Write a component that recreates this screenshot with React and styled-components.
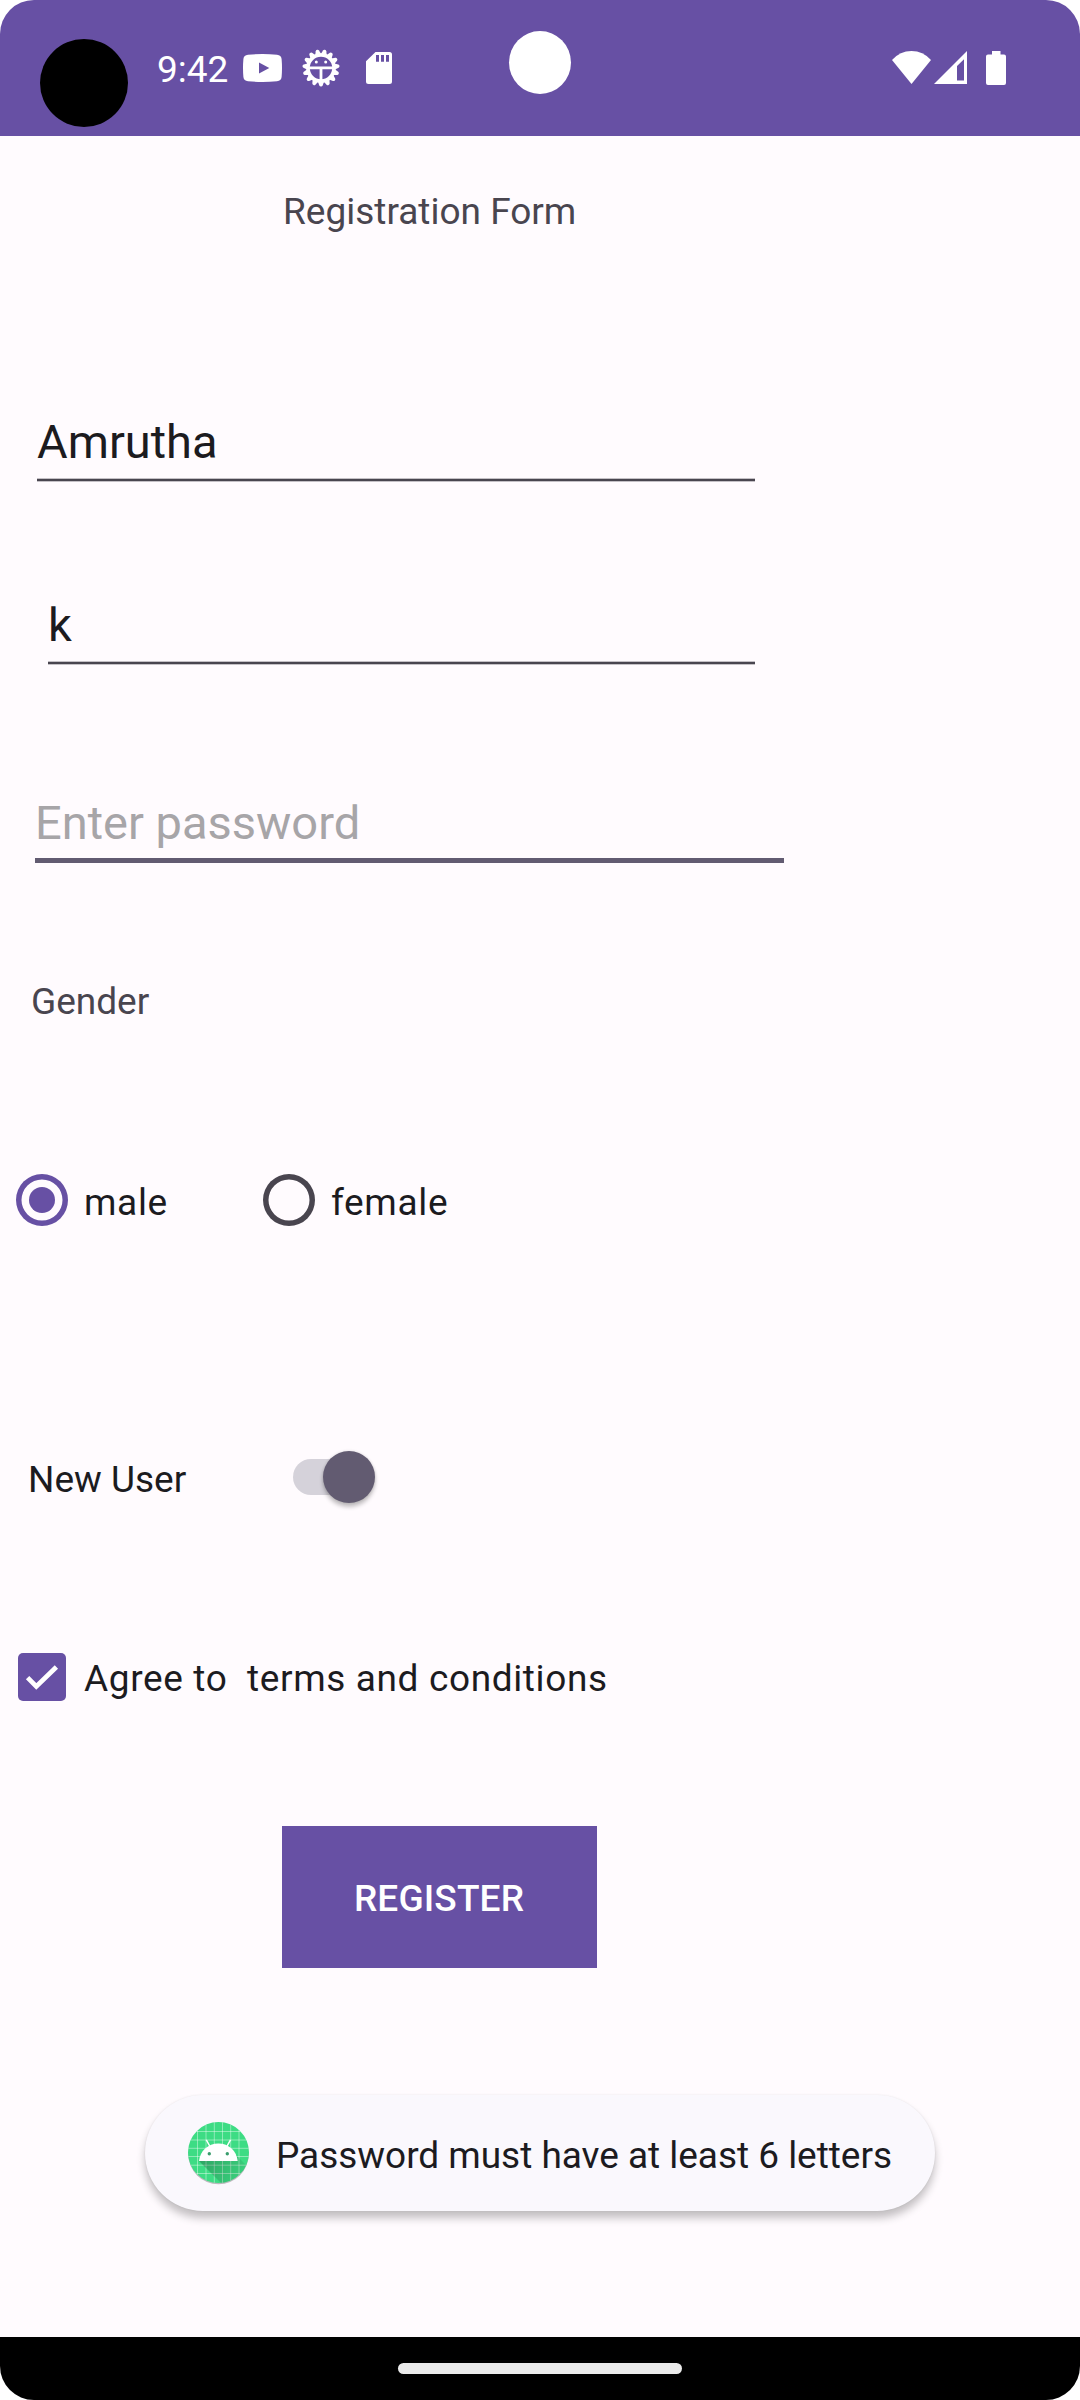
import React from "react";
import styled, { createGlobalStyle } from "styled-components";

const purple = "#6750A4";
const slate = "#625B71";
const ink = "#1C1B1F";
const muted = "#49454F";
const surface = "#FFFBFE";

const GlobalStyle = createGlobalStyle`
  *, *::before, *::after { box-sizing: border-box; }
  body {
    margin: 0;
    background: #fff;
    font-family: Roboto, "Liberation Sans", sans-serif;
  }
`;

const Phone = styled.div`
  position: relative;
  display: flex;
  flex-direction: column;
  width: 1080px;
  height: 2400px;
  overflow: hidden;
  border-radius: 34px;
  background: ${surface};
  color: ${ink};
  font-size: 37px;
  line-height: 43px;
`;

const StatusBar = styled.header`
  display: flex;
  align-items: flex-start;
  flex: none;
  height: 136px;
  padding: 0 74px 0 40px;
  background: ${purple};
  color: #fff;
`;

const Blob = styled.span`
  width: 88px;
  height: 88px;
  margin-top: 39px;
  border-radius: 50%;
  background: #000;
`;

const Clock = styled.time`
  width: 71px;
  margin: 48px 0 0 29px;
  white-space: nowrap;
`;

const StatusIcon = styled.svg`
  display: block;
  flex: none;
  width: ${(p) => p.$w}px;
  height: ${(p) => p.$h}px;
  margin: ${(p) => p.$top}px 0 0 ${(p) => p.$gap}px;
  fill: currentColor;
`;

const Signals = styled.div`
  display: flex;
  margin-left: auto;
`;

const Camera = styled.span`
  position: absolute;
  top: 31px;
  left: 509px;
  width: 62px;
  height: 63px;
  border-radius: 50%;
  background: #fff;
`;

const Form = styled.form`
  display: flex;
  flex-direction: column;
  align-items: flex-start;
  flex: 1;
`;

const Title = styled.h1`
  margin: 54px 0 0 283px;
  font: inherit;
  color: ${muted};
`;

const Field = styled.input`
  display: block;
  width: ${(p) => p.$width}px;
  height: 68px;
  margin: ${(p) => p.$top}px 0 0 ${(p) => p.$left}px;
  padding: 0 0 13px;
  border: 0;
  border-radius: 0;
  outline: 0;
  background: ${(p) =>
    p.$active
      ? `linear-gradient(${slate}, ${slate}) bottom / 100% 5px no-repeat`
      : `linear-gradient(${muted}, ${muted}) 0 calc(100% - 1px) / 100% 2px no-repeat,
         linear-gradient(rgba(73, 69, 79, 0.32), rgba(73, 69, 79, 0.32)) bottom / 100% 4px no-repeat`};
  color: ${ink};
  font: 47px/55px Roboto, "Liberation Sans", sans-serif;

  &::placeholder {
    color: #a7a5a8;
    opacity: 1;
  }
`;

const GroupLabel = styled.div`
  margin: 117px 0 0 31px;
  color: ${muted};
`;

const RadioRow = styled.div`
  display: flex;
  height: 53px;
  margin: 150px 0 0 16px;
`;

const RadioOption = styled.label`
  display: flex;
  width: 247px;
  letter-spacing: 0.656px;
`;

const RadioMark = styled.span`
  display: flex;
  align-items: center;
  justify-content: center;
  flex: none;
  width: 52px;
  height: 52px;
  margin-top: 1px;
  border-radius: 50%;
  box-shadow: inset 0 0 0 5.5px ${(p) => (p.$on ? purple : muted)};

  &::after {
    content: "";
    width: 26px;
    height: 26px;
    border-radius: 50%;
    background: ${(p) => (p.$on ? purple : "transparent")};
  }
`;

const OptionText = styled.span`
  margin: ${(p) => p.$top}px 0 0 ${(p) => p.$gap}px;
  white-space: pre;
`;

const SwitchRow = styled.label`
  display: flex;
  height: 53px;
  margin: 225px 0 0 28px;
`;

const SwitchText = styled.span`
  width: 265px;
  margin-top: 7px;
`;

const Track = styled.span`
  display: flex;
  align-items: center;
  justify-content: flex-end;
  width: 82px;
  height: 36px;
  margin-top: 8px;
  border-radius: 18px;
  background: linear-gradient(#d5d2da, #d5d2da) left / 60px 100% no-repeat;
`;

const Thumb = styled.span`
  width: 52px;
  height: 52px;
  flex: none;
  border-radius: 50%;
  background: ${slate};
  box-shadow: 0 4px 4px rgba(0, 0, 0, 0.24), 0 0 3px rgba(0, 0, 0, 0.14);
`;

const CheckRow = styled.label`
  display: flex;
  height: 48px;
  margin: 149px 0 0 18px;
  letter-spacing: 0.63px;
`;

const CheckBox = styled.span`
  width: 48px;
  height: 48px;
  border-radius: 5px;
  background: ${purple};

  svg {
    display: block;
  }
`;

const RegisterButton = styled.button`
  width: 315px;
  height: 142px;
  margin: 125px 0 0 282px;
  padding: 2px 1px 0 0;
  border: 0;
  background: ${purple};
  color: #fff;
  font: 500 37px/43px Roboto, "Liberation Sans", sans-serif;
  letter-spacing: 0.15px;
`;

const Toast = styled.div`
  display: flex;
  width: 790px;
  height: 116px;
  margin: 127px 0 0 145px;
  padding: 27px 0 0 43px;
  border-radius: 58px;
  background: #faf8fd;
  box-shadow: 0 7px 8px rgba(0, 0, 0, 0.24), 0 0 2px rgba(0, 0, 0, 0.08);
  letter-spacing: -0.03px;
  white-space: nowrap;

  svg {
    flex: none;
    display: block;
  }
`;

const NavBar = styled.footer`
  display: flex;
  justify-content: center;
  flex: none;
  height: 63px;
  padding-top: 26px;
  background: #000;
`;

const Handle = styled.span`
  width: 284px;
  height: 11px;
  border-radius: 6px;
  background: #ebebeb;
`;

const teeth = Array.from({ length: 15 }, (_, i) => 180 + i * 24);

function StatusIcons() {
  return (
    <>
      <StatusIcon $w={39} $h={28} $top={54} $gap={15} viewBox="0 0 39 28">
        <path
          fillRule="evenodd"
          d="M5 .8Q19.500-.6 34 .8Q38.200 1.300 38.600 5Q39.400 14 38.600 23Q38.200 26.700 34 27.200Q19.500 28.600 5 27.200Q.8 26.700.4 23Q-.4 14 .4 5Q.8 1.300 5 .8ZM16 8.500V19.500L26.300 14Z"
        />
      </StatusIcon>
      <StatusIcon $w={38} $h={38} $top={49} $gap={20} viewBox="-19 -19 38 38">
        <circle r="13" fill="none" stroke="currentColor" strokeWidth="3.600" />
        {teeth.map((angle) => (
          <path
            key={angle}
            d="M-3 13.800L-1.700 17.500Q-1.300 18.600 0 18.600T1.700 17.500L3 13.800Z"
            transform={`rotate(${angle - 180})`}
          />
        ))}
        <path d="M-13-1.500H13V1.200H1.400V13H-1.400V1.200H-13Z" />
        <circle cx="-4.700" cy="-6" r="1.500" />
        <circle cx="4.700" cy="-6" r="1.500" />
      </StatusIcon>
      <StatusIcon $w={26} $h={32} $top={52} $gap={26} viewBox="0 0 26 32">
        <path
          fillRule="evenodd"
          d="M9.500 0H23.500Q26 0 26 2.500V29.500Q26 32 23.500 32H2.500Q0 32 0 29.500V9.300ZM10 3V9.800H13V3ZM15 3V9.800H18V3ZM20 3V9.800H23V3Z"
        />
      </StatusIcon>
      <Signals>
        <StatusIcon $w={39} $h={33} $top={51} $gap={0} viewBox="0 0 39 33">
          <path d="M19.500 33L0 9Q8 0 19.500 0T39 9Z" />
        </StatusIcon>
        <StatusIcon $w={33} $h={33} $top={51} $gap={3} viewBox="0 0 33 33">
          <path fillRule="evenodd" d="M33 0V33H0ZM30 8.200L23 15V29.500H30Z" />
        </StatusIcon>
        <StatusIcon $w={20} $h={34} $top={51} $gap={19} viewBox="0 0 20 34">
          <path d="M6 0H14.500V3.500H18Q20 3.500 20 5.500V32Q20 34 18 34H2Q0 34 0 32V5.500Q0 3.500 2 3.500H6Z" />
        </StatusIcon>
      </Signals>
    </>
  );
}

function AppIcon() {
  return (
    <svg width="61" height="63" viewBox="0 0 61 63">
      <defs>
        <clipPath id="disc">
          <circle cx="30.500" cy="30.500" r="30.500" />
        </clipPath>
        <linearGradient id="cast" x1="11" y1="36" x2="50" y2="60" gradientUnits="userSpaceOnUse">
          <stop offset="0" stopColor="#000" stopOpacity="0.260" />
          <stop offset="1" stopColor="#000" stopOpacity="0.060" />
        </linearGradient>
      </defs>
      <circle cx="30.500" cy="32" r="30.300" fill="#000" opacity="0.250" />
      <g clipPath="url(#disc)">
        <rect width="61" height="61" fill="#3ddc84" />
        <path
          d="M9.500 0V61M18 0V61M26.300 0V61M34.500 0V61M42.700 0V61M51 0V61M0 9.500H61M0 18H61M0 26.300H61M0 34.500H61M0 43.200H61M0 51.500H61"
          stroke="#fff"
          strokeOpacity="0.420"
        />
        <path d="M11 39L34 62H61V46L48 33Z" fill="url(#cast)" />
      </g>
      <path d="M11 39C12 29 20 21.500 30.400 21.500S48.700 29 49.700 39Z" fill="#fff" />
      <path d="M18.300 17.800L22 24.500M42.500 17.800L38.800 24.500" stroke="#fff" strokeWidth="1.500" />
      <circle cx="21.300" cy="31.800" r="1.700" fill="#3a9d6d" />
      <circle cx="39.300" cy="31.800" r="1.700" fill="#3a9d6d" />
    </svg>
  );
}

export default function App() {
  return (
    <Phone>
      <GlobalStyle />
      <StatusBar>
        <Blob />
        <Clock>9:42</Clock>
        <StatusIcons />
      </StatusBar>
      <Camera />
      <Form>
        <Title>Registration Form</Title>
        <Field $width={718} $left={37} $top={181} defaultValue="Amrutha" spellCheck={false} />
        <Field $width={707} $left={48} $top={115} defaultValue="k" spellCheck={false} />
        <Field $active $width={749} $left={35} $top={130} placeholder="Enter password" />
        <GroupLabel>Gender</GroupLabel>
        <RadioRow>
          <RadioOption>
            <RadioMark $on />
            <OptionText $top={8} $gap={16}>male</OptionText>
          </RadioOption>
          <RadioOption>
            <RadioMark />
            <OptionText $top={8} $gap={16}>female</OptionText>
          </RadioOption>
        </RadioRow>
        <SwitchRow>
          <SwitchText>New User</SwitchText>
          <Track>
            <Thumb />
          </Track>
        </SwitchRow>
        <CheckRow>
          <CheckBox>
            <svg width="48" height="48" viewBox="0 0 48 48">
              <path d="M9.600 24.600L18.300 33.400L38.400 14" fill="none" stroke="#fff" strokeWidth="4.700" />
            </svg>
          </CheckBox>
          <OptionText $top={4} $gap={18}>{"Agree to  terms and conditions"}</OptionText>
        </CheckRow>
        <RegisterButton type="button">REGISTER</RegisterButton>
        <Toast>
          <AppIcon />
          <OptionText $top={12} $gap={27}>Password must have at least 6 letters</OptionText>
        </Toast>
      </Form>
      <NavBar>
        <Handle />
      </NavBar>
    </Phone>
  );
}
